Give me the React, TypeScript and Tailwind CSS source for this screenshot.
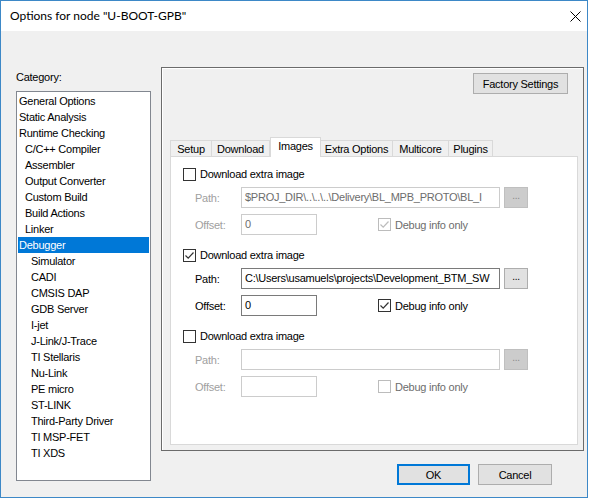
import { ReactNode } from 'react';

const categories: [string, number][] = [
  ['General Options', 0],
  ['Static Analysis', 0],
  ['Runtime Checking', 0],
  ['C/C++ Compiler', 1],
  ['Assembler', 1],
  ['Output Converter', 1],
  ['Custom Build', 1],
  ['Build Actions', 1],
  ['Linker', 1],
  ['Debugger', 0],
  ['Simulator', 2],
  ['CADI', 2],
  ['CMSIS DAP', 2],
  ['GDB Server', 2],
  ['I-jet', 2],
  ['J-Link/J-Trace', 2],
  ['TI Stellaris', 2],
  ['Nu-Link', 2],
  ['PE micro', 2],
  ['ST-LINK', 2],
  ['Third-Party Driver', 2],
  ['TI MSP-FET', 2],
  ['TI XDS', 2],
];

const indent = ['pl-[1px]', 'pl-[7px]', 'pl-[13px]'];

const tabs = [
  { name: 'Setup', w: 'w-[42px]' },
  { name: 'Download', w: 'w-[58px]' },
  { name: 'Images', w: 'w-[51px]', active: true },
  { name: 'Extra Options', w: 'w-[72px]' },
  { name: 'Multicore', w: 'w-[56px]' },
  { name: 'Plugins', w: 'w-[44px]' },
];

function Check({ checked, disabled }: { checked?: boolean; disabled?: boolean }) {
  return (
    <div
      className={
        'w-[13px] h-[13px] border bg-white flex items-center justify-center shrink-0 ' +
        (disabled ? 'border-[#bcbcbc]' : 'border-[#333333]')
      }
    >
      {checked && (
        <svg width="11" height="11" viewBox="0 0 11 11">
          <polyline
            points="1.5,5.5 4.2,8.2 9.5,2.5"
            fill="none"
            stroke={disabled ? '#bcbcbc' : '#333333'}
            strokeWidth="1.2"
          />
        </svg>
      )}
    </div>
  );
}

function Field({ label, disabled, children }: { label: string; disabled?: boolean; children: ReactNode }) {
  return (
    <div className="flex items-center h-[21px] pl-[12px]">
      <div className={'w-[46px] ' + (disabled ? 'text-[#a0a0a0]' : 'text-black')}>{label}</div>
      {children}
    </div>
  );
}

function ImageGroup({
  checked,
  path,
  offset,
  debug,
  first,
}: {
  checked: boolean;
  path: string;
  offset: string;
  debug: boolean;
  first?: boolean;
}) {
  const off = !checked;
  return (
    <div className={first ? '' : 'mt-[12px]'}>
      <div className="flex items-center h-[16px]">
        <Check checked={checked} />
        <span className="ml-[4px]">Download extra image</span>
      </div>
      <div className="mt-[5px]">
        <Field label="Path:" disabled={off}>
          <div
            className={
              'w-[259px] h-[21px] border bg-white pl-[3px] pr-[2px] leading-[19px] whitespace-nowrap overflow-hidden ' +
              (off ? 'border-[#cccccc] text-[#6d6d6d]' : 'border-[#7a7a7a] text-black')
            }
          >
            {path}
          </div>
          <div
            className={
              'ml-[4px] w-[24px] h-[21px] border flex items-center justify-center leading-none pb-[4px] text-[10px] ' +
              (off ? 'bg-[#cccccc] border-[#bfbfbf] text-[#8a8a8a]' : 'bg-[#e1e1e1] border-[#adadad] text-black')
            }
          >
            ...
          </div>
        </Field>
      </div>
      <div className="mt-[6px]">
        <Field label="Offset:" disabled={off}>
          <div
            className={
              'w-[76px] h-[21px] border bg-white pl-[3px] leading-[19px] ' +
              (off ? 'border-[#cccccc] text-[#6d6d6d]' : 'border-[#7a7a7a] text-black')
            }
          >
            {offset}
          </div>
          <div className="ml-[61px] flex items-center">
            <Check checked={debug} disabled={off} />
            <span className={'ml-[4px] ' + (off ? 'text-[#6d6d6d]' : 'text-black')}>Debug info only</span>
          </div>
        </Field>
      </div>
    </div>
  );
}

export default function App() {
  return (
    <div className="w-[591px] h-[498px] bg-white font-['Liberation_Sans',Arial,sans-serif] text-[11px] tracking-[-0.25px] leading-[16px] text-black">
      <div className="w-[588px] h-[498px] border border-[#3d88c7] flex flex-col bg-[#f0f0f0]">
        {/* title bar */}
        <div className="h-[30px] bg-white flex items-center justify-between pl-[9px] pr-[6px] shrink-0">
          <span className="font-['Lato',sans-serif] text-[12px] tracking-normal">Options for node "U-BOOT-GPB"</span>
          <svg width="11" height="11" viewBox="0 0 11 11">
            <path d="M0.5 0.5 L10.5 10.5 M10.5 0.5 L0.5 10.5" stroke="#000" strokeWidth="1" />
          </svg>
        </div>

        <div className="flex flex-1">
          {/* category column */}
          <div className="ml-[15px] mt-[38px] flex flex-col">
            <div>Category:</div>
            <div className="mt-[6px] w-[135px] h-[390px] border border-[#828790] bg-white p-[1px]">
              {categories.map(([name, lvl]) => (
                <div
                  key={name}
                  className={
                    'h-[16px] leading-[16px] whitespace-nowrap ' +
                    indent[lvl] +
                    (name === 'Debugger' ? ' bg-[#0078d7] text-white' : '')
                  }
                >
                  {name}
                </div>
              ))}
            </div>
          </div>

          {/* right side */}
          <div className="ml-[10px] mt-[36px] flex flex-col">
            <div className="w-[423px] h-[384px] border border-[#6b6b6b] shadow-[inset_1px_1px_0_#ffffff] flex flex-col">
              <div className="flex justify-end pt-[5px] pr-[15px]">
                <div className="w-[95px] h-[21px] bg-[#e1e1e1] border border-[#adadad] flex items-center justify-center">
                  Factory Settings
                </div>
              </div>

              <div className="ml-[8px] mt-[42px] flex items-end h-[20px] relative z-10">
                {tabs.map((t, i) => (
                  <div
                    key={t.name}
                    className={
                      t.w +
                      ' flex items-center justify-center whitespace-nowrap border-t border-r border-[#d9d9d9] ' +
                      (i === 0 ? 'border-l ' : '') +
                      (t.active
                        ? 'h-[20px] bg-white border-l -mb-px pb-[3px]'
                        : 'h-[16px] bg-[#f0f0f0]')
                    }
                  >
                    {t.name}
                  </div>
                ))}
              </div>

              <div className="ml-[8px] w-[408px] h-[289px] border border-[#d9d9d9] bg-white pt-[9px] pl-[12px]">
                <ImageGroup
                  first
                  checked={false}
                  path="$PROJ_DIR\..\..\..\Delivery\BL_MPB_PROTO\BL_I"
                  offset="0"
                  debug={true}
                />
                <ImageGroup
                  checked={true}
                  path="C:\Users\usamuels\projects\Development_BTM_SW"
                  offset="0"
                  debug={true}
                />
                <ImageGroup checked={false} path="" offset="" debug={false} />
              </div>
            </div>

            <div className="flex justify-end gap-[8px] mt-[13px] pr-[32px]">
              <div className="w-[73px] h-[21px] bg-[#e1e1e1] border border-[#0078d7] shadow-[inset_0_0_0_1px_#0078d7] flex items-center justify-center">
                OK
              </div>
              <div className="w-[74px] h-[21px] bg-[#e1e1e1] border border-[#adadad] flex items-center justify-center">
                Cancel
              </div>
            </div>
          </div>
        </div>
      </div>
    </div>
  );
}
